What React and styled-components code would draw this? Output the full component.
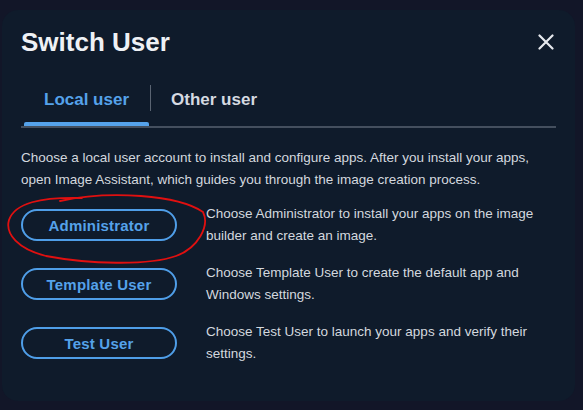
import React from "react";
import styled, { createGlobalStyle } from "styled-components";

const Global = createGlobalStyle`
  html, body { margin: 0; padding: 0; background: #121628; }
  body { font-family: "Liberation Sans", Arial, sans-serif; }
  #root { width: 583px; height: 410px; overflow: hidden; }
`;

const Page = styled.div`
  width: 583px;
  height: 410px;
  box-sizing: border-box;
  padding: 10px 8px 9px 2px;
  background: #121628;
`;

const Panel = styled.div`
  height: 100%;
  box-sizing: border-box;
  background: #0f1b2b;
  border-radius: 16px;
  padding: 17px 19px 0 19px;
  display: flex;
  flex-direction: column;
`;

const Header = styled.div`
  display: flex;
  align-items: center;
  justify-content: space-between;
  height: 30px;
`;

const Title = styled.h1`
  margin: 0;
  font-size: 26px;
  line-height: 30px;
  font-weight: 700;
  color: #eef1f5;
`;

const Close = styled.button`
  border: 0;
  background: none;
  padding: 0;
  width: 20px;
  height: 20px;
  display: flex;
  align-items: center;
  justify-content: center;
  color: #e6e9ee;
`;

const TabBar = styled.div`
  display: flex;
  align-items: center;
  margin-top: 23px;
  border-bottom: 2px solid #444f5e;
`;

const Tab = styled.div`
  position: relative;
  padding: 10px 20px 16px 20px;
  margin-left: ${(p) => (p.$first ? "3px" : "0")};
  font-size: 17px;
  line-height: 20px;
  font-weight: 700;
  color: ${(p) => (p.$active ? "#55a2ea" : "#d5dae1")};
  &::after {
    content: "";
    display: ${(p) => (p.$active ? "block" : "none")};
    position: absolute;
    left: 0;
    right: 0;
    bottom: 0;
    height: 4px;
    border-radius: 2px 2px 0 0;
    background: #55a2ea;
  }
`;

const Divider = styled.div`
  width: 1px;
  height: 26px;
  background: #5a6472;
  margin-top: -10px;
  margin-left: 1px;
`;

const Intro = styled.p`
  margin: 19px 0 0 0;
  max-width: 510px;
  font-size: 13.5px;
  line-height: 22px;
  color: #d3d8df;
`;

const Rows = styled.div`
  display: flex;
  flex-direction: column;
  gap: 15px;
  margin-top: 12px;
`;

const Row = styled.div`
  display: flex;
  align-items: center;
  gap: 29px;
`;

const UserButton = styled.button`
  flex: 0 0 auto;
  width: 156px;
  height: 32px;
  box-sizing: border-box;
  border: 2px solid #4f9ee8;
  border-radius: 16px;
  background: transparent;
  color: #55a2ea;
  font-family: "Liberation Sans", Arial, sans-serif;
  font-size: 15px;
  font-weight: 700;
  letter-spacing: 0.2px;
  padding: 0;
`;

const Desc = styled.div`
  width: 336px;
  font-size: 13.5px;
  line-height: 22px;
  color: #d3d8df;
`;

const Marker = styled.svg`
  position: absolute;
  left: 0;
  top: 0;
  pointer-events: none;
`;

const Wrap = styled.div`
  position: relative;
`;

const users = [
  { name: "Administrator", desc: "Choose Administrator to install your apps on the image builder and create an image." },
  { name: "Template User", desc: "Choose Template User to create the default app and Windows settings." },
  { name: "Test User", desc: "Choose Test User to launch your apps and verify their settings." },
];

export default function App() {
  return (
    <Wrap>
      <Global />
      <Page>
        <Panel>
          <Header>
            <Title>Switch User</Title>
            <Close aria-label="Close">
              <svg width="16" height="16" viewBox="0 0 16 16">
                <path d="M1.5 1.5 L14.5 14.5 M14.5 1.5 L1.5 14.5" stroke="currentColor" strokeWidth="2.2" strokeLinecap="round" />
              </svg>
            </Close>
          </Header>
          <TabBar>
            <Tab $active $first>Local user</Tab>
            <Divider />
            <Tab>Other user</Tab>
          </TabBar>
          <Intro>
            Choose a local user account to install and configure apps. After you install your apps, open Image Assistant, which guides you through the image creation process.
          </Intro>
          <Rows>
            {users.map((u) => (
              <Row key={u.name}>
                <UserButton>{u.name}</UserButton>
                <Desc>{u.desc}</Desc>
              </Row>
            ))}
          </Rows>
        </Panel>
      </Page>
      <Marker width="583" height="410" viewBox="0 0 583 410">
        <path
          d="M60 201 C 110 190, 178 195, 203 212 C 210 226, 198 248, 176 256 C 148 266, 88 264, 46 256 C 18 249, 5 234, 9 220 C 15 203, 40 197, 82 198"
          fill="none"
          stroke="#e01010"
          strokeWidth="1.8"
          strokeLinecap="round"
        />
      </Marker>
    </Wrap>
  );
}
